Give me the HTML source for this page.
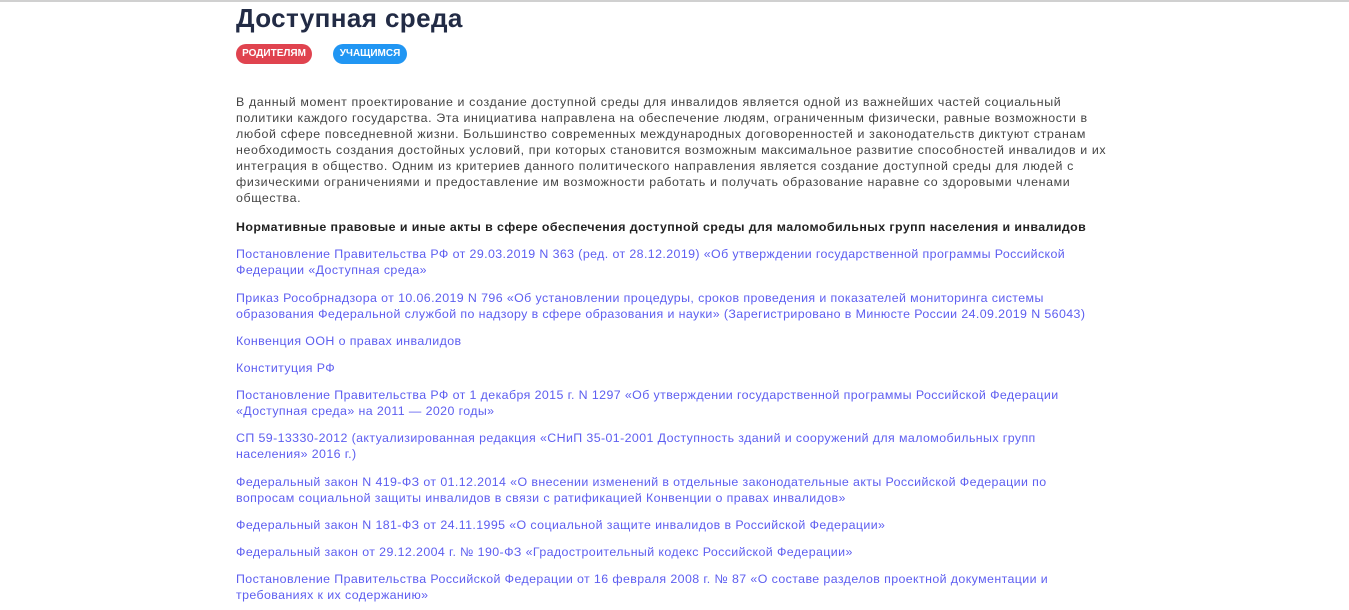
<!DOCTYPE html>
<html><head><meta charset="utf-8"><style>
body{margin:0;background:#fff;width:1349px;height:610px;overflow:hidden;font-family:"Liberation Sans",sans-serif;position:relative}
.top{position:absolute;left:0;top:0;width:1349px;height:2px;background:#d0d0d0}
.c{position:absolute;left:236px;top:0;width:900px}
h1{position:absolute;top:3px;left:0;margin:0;font-size:26px;font-weight:bold;color:#222b45;white-space:nowrap;letter-spacing:0.4px}
.b{position:absolute;top:44px;height:20px;border-radius:10px;color:#fff;font-size:10px;font-weight:bold;line-height:20px;text-align:center}
p{margin:0;font-size:12.4px;line-height:16px;color:#444;white-space:nowrap;letter-spacing:0.4px}
.t{position:absolute;top:94px;left:0;letter-spacing:0.62px}
.h{position:absolute;top:219px;left:0;font-weight:bold;color:#222;font-size:12.4px;letter-spacing:0.42px}
.l{position:absolute;left:0;color:#5d5ef0}
</style></head><body>
<div class="top"></div>
<div class="c">
<h1>Доступная среда</h1>
<div class="b" style="left:0;width:76px;background:#e0434f">РОДИТЕЛЯМ</div>
<div class="b" style="left:97px;width:74px;background:#2196f3">УЧАЩИМСЯ</div>
<p class="t">В данный момент проектирование и создание доступной среды для инвалидов является одной из важнейших частей социальный<br>политики каждого государства. Эта инициатива направлена на обеспечение людям, ограниченным физически, равные возможности в<br>любой сфере повседневной жизни. Большинство современных международных договоренностей и законодательств диктуют странам<br>необходимость создания достойных условий, при которых становится возможным максимальное развитие способностей инвалидов и их<br>интеграция в общество. Одним из критериев данного политического направления является создание доступной среды для людей с<br>физическими ограничениями и предоставление им возможности работать и получать образование наравне со здоровыми членами<br>общества.</p>
<p class="h">Нормативные правовые и иные акты в сфере обеспечения доступной среды для маломобильных групп населения и инвалидов</p>
<p class="l" style="top:246px">Постановление Правительства РФ от 29.03.2019 N 363 (ред. от 28.12.2019) «Об утверждении государственной программы Российской<br>Федерации «Доступная среда»</p>
<p class="l" style="top:290px">Приказ Рособрнадзора от 10.06.2019 N 796 «Об установлении процедуры, сроков проведения и показателей мониторинга системы<br>образования Федеральной службой по надзору в сфере образования и науки» (Зарегистрировано в Минюсте России 24.09.2019 N 56043)</p>
<p class="l" style="top:333px">Конвенция ООН о правах инвалидов</p>
<p class="l" style="top:360px">Конституция РФ</p>
<p class="l" style="top:387px">Постановление Правительства РФ от 1 декабря 2015 г. N 1297 «Об утверждении государственной программы Российской Федерации<br>«Доступная среда» на 2011 — 2020 годы»</p>
<p class="l" style="top:430px">СП 59-13330-2012 (актуализированная редакция «СНиП 35-01-2001 Доступность зданий и сооружений для маломобильных групп<br>населения» 2016 г.)</p>
<p class="l" style="top:474px">Федеральный закон N 419-ФЗ от 01.12.2014 «О внесении изменений в отдельные законодательные акты Российской Федерации по<br>вопросам социальной защиты инвалидов в связи с ратификацией Конвенции о правах инвалидов»</p>
<p class="l" style="top:517px">Федеральный закон N 181-ФЗ от 24.11.1995 «О социальной защите инвалидов в Российской Федерации»</p>
<p class="l" style="top:544px">Федеральный закон от 29.12.2004 г. № 190-ФЗ «Градостроительный кодекс Российской Федерации»</p>
<p class="l" style="top:571px">Постановление Правительства Российской Федерации от 16 февраля 2008 г. № 87 «О составе разделов проектной документации и<br>требованиях к их содержанию»</p>
</div>
</body></html>
